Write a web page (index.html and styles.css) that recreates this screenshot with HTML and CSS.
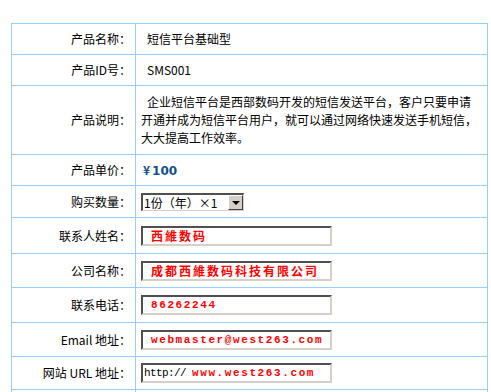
FILE: index.html
```html
<!DOCTYPE html>
<html lang="zh-CN">
<head>
<meta charset="utf-8">
<title>短信平台基础型</title>
<link rel="stylesheet" href="styles.css">
</head>
<body>
<table class="order">
  <tr class="r31">
    <td class="lbl">产品名称：</td>
    <td class="val indent">短信平台基础型</td>
  </tr>
  <tr class="r31">
    <td class="lbl">产品ID号：</td>
    <td class="val indent">SMS001</td>
  </tr>
  <tr class="r69">
    <td class="lbl">产品说明：</td>
    <td class="val desc">企业短信平台是西部数码开发的短信发送平台，客户只要申请开通并成为短信平台用户，就可以通过网络快速发送手机短信，大大提高工作效率。</td>
  </tr>
  <tr class="r31">
    <td class="lbl">产品单价：</td>
    <td class="val"><span class="price">¥<span class="num">100</span></span></td>
  </tr>
  <tr class="r32">
    <td class="lbl">购买数量：</td>
    <td class="val">
      <span class="combo">
        <select class="combo-sel">
          <option>1份（年）×1</option>
          <option>1份（年）×2</option>
          <option>1份（年）×3</option>
        </select>
        <span class="combo-btn"><span class="tri"></span></span>
      </span>
    </td>
  </tr>
  <tr class="r36">
    <td class="lbl">联系人姓名：</td>
    <td class="val"><span class="field"><input class="inp" type="text" value="西維数码"></span></td>
  </tr>
  <tr class="r34">
    <td class="lbl">公司名称：</td>
    <td class="val"><span class="field"><input class="inp" type="text" value="成都西維数码科技有限公司"></span></td>
  </tr>
  <tr class="r35">
    <td class="lbl">联系电话：</td>
    <td class="val"><span class="field"><input class="inp mono" type="text" value="86262244"></span></td>
  </tr>
  <tr class="r34">
    <td class="lbl">Email 地址：</td>
    <td class="val"><span class="field"><input class="inp mono" type="text" value="webmaster@west263.com"></span></td>
  </tr>
  <tr class="r33">
    <td class="lbl">网站 URL 地址：</td>
    <td class="val"><span class="field field-url"><span class="prefix">http://</span><input class="inp mono tight" type="text" value="www.west263.com"></span></td>
  </tr>
  <tr class="r33">
    <td class="lbl"></td>
    <td class="val"></td>
  </tr>
</table>
</body>
</html>
```

FILE: styles.css
```css
html, body {
  margin: 0;
  padding: 0;
  background: #ffffff;
}

body {
  font-family: "Noto Sans CJK SC", "DejaVu Sans", sans-serif;
  font-size: 12px;
  color: #000000;
}

.order {
  margin: 23px 0 0 11px;
  width: 477px;
  box-sizing: border-box;
  border-collapse: separate;
  border-spacing: 0;
  border-top: 1px solid #99ccff;
  border-left: 1px solid #99ccff;
  table-layout: fixed;
}

.order td {
  box-sizing: border-box;
  padding: 0;
  border-right: 1px solid #99ccff;
  border-bottom: 1px solid #99ccff;
  vertical-align: middle;
  line-height: 16px;
}

.r31 { height: 31px; }
.r32 { height: 32px; }
.r33 { height: 33px; }
.r34 { height: 34px; }
.r35 { height: 35px; }
.r36 { height: 36px; }
.r69 { height: 69px; }

.order td.lbl {
  width: 124px;
  text-align: right;
  padding-right: 4px;
  white-space: nowrap;
}

.order td.val {
  padding: 0 8px 0 5px;
  text-align: left;
}

.order td.indent {
  text-indent: 6px;
}

.order td.desc {
  text-indent: 6px;
  line-height: 18px;
}

.price {
  color: #124f8e;
  font-weight: bold;
  font-size: 12px;
  padding-left: 2px;
}

.price .num {
  margin-left: 2px;
  font-family: "DejaVu Sans", sans-serif;
  font-size: 12px;
}

/* combo box */
.combo {
  display: inline-flex;
  vertical-align: middle;
  box-sizing: border-box;
  width: 103px;
  height: 18px;
  border-top: 2px solid #505050;
  border-left: 2px solid #505050;
  border-right: 1px solid #d4d0c8;
  border-bottom: 1px solid #d4d0c8;
  background: #ffffff;
}

.combo-sel {
  flex: 1;
  min-width: 0;
  appearance: none;
  -webkit-appearance: none;
  border: 0;
  outline: none;
  background: #ffffff;
  font-family: "Noto Sans CJK SC", sans-serif;
  font-size: 12px;
  line-height: 15px;
  height: 15px;
  padding: 0 0 0 1px;
  margin: 0;
  color: #000000;
}

.combo-btn {
  flex: 0 0 auto;
  box-sizing: border-box;
  width: 15px;
  height: 15px;
  background: #d4d0c8;
  border-top: 1px solid #ffffff;
  border-left: 1px solid #ffffff;
  border-right: 1px solid #404040;
  border-bottom: 1px solid #404040;
  display: flex;
  align-items: center;
  justify-content: center;
}

.tri {
  width: 0;
  height: 0;
  border-left: 4px solid transparent;
  border-right: 4px solid transparent;
  border-top: 4px solid #000000;
  margin-top: 1px;
}

/* text fields */
.field {
  display: inline-flex;
  align-items: center;
  vertical-align: middle;
  box-sizing: border-box;
  width: 191px;
  height: 20px;
  border-top: 2px solid #505050;
  border-left: 2px solid #505050;
  border-right: 2px solid #d4d0c8;
  border-bottom: 2px solid #d4d0c8;
  background: #ffffff;
}

.inp {
  flex: 1;
  min-width: 0;
  height: 16px;
  border: 0;
  outline: none;
  margin: 0;
  padding: 0 0 0 8px;
  background: transparent;
  color: #ff0000;
  font-family: "Noto Sans CJK SC", sans-serif;
  font-size: 12px;
  font-weight: bold;
  letter-spacing: 2px;
}

.inp.mono {
  font-family: "Liberation Mono", monospace;
  font-size: 11px;
  letter-spacing: 1.6px;
}

.field-url {
  padding-left: 1px;
}

.prefix {
  font-family: "Liberation Mono", monospace;
  font-size: 11px;
  letter-spacing: -0.6px;
  color: #000000;
  white-space: nowrap;
}

.inp.tight {
  padding-left: 6px;
}
```
